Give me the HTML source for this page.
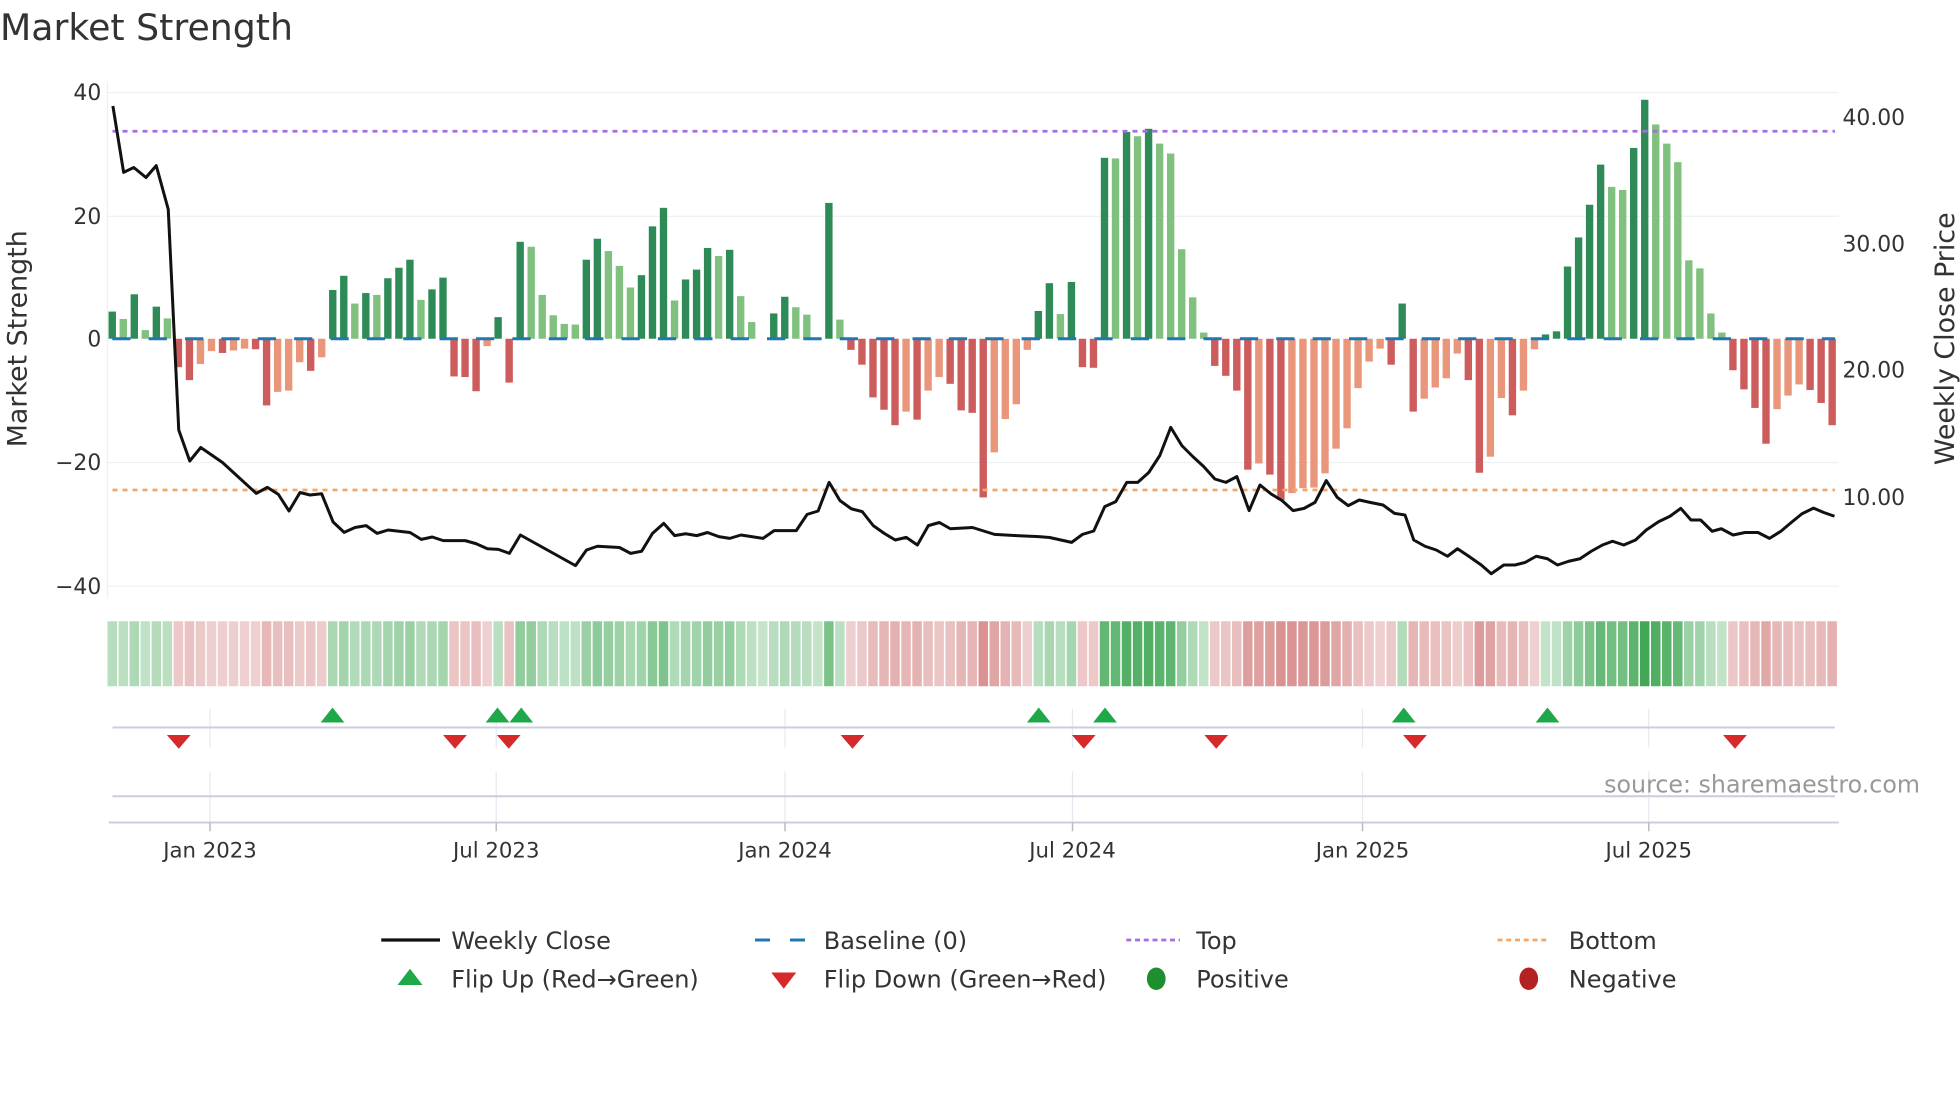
<!DOCTYPE html>
<html><head><meta charset="utf-8"><style>
html,body{margin:0;padding:0;background:#fff;}
svg{display:block;font-family:"DejaVu Sans","Liberation Sans",sans-serif;}
</style></head><body>
<svg id="s" width="1960" height="1102" viewBox="0 0 1568 881.6" xmlns="http://www.w3.org/2000/svg">
<text x="0" y="32" font-size="29" fill="#333">Market Strength</text>
<g stroke="#edf0f4" stroke-width="1">
<line x1="86" y1="74" x2="1471" y2="74"/><line x1="86" y1="173" x2="1471" y2="173"/>
<line x1="86" y1="370" x2="1471" y2="370"/><line x1="86" y1="469" x2="1471" y2="469"/>
<line x1="86" y1="65" x2="86" y2="478"/>
</g>
<g font-size="17.5" fill="#333" text-anchor="end">
<text x="81" y="80">40</text><text x="81" y="179">20</text><text x="81" y="277">0</text>
<text x="81" y="376">−20</text><text x="81" y="475">−40</text>
</g>
<g font-size="17.5" fill="#333">
<text x="1474" y="100">40.00</text><text x="1474" y="201">30.00</text>
<text x="1474" y="302">20.00</text><text x="1474" y="404">10.00</text>
</g>
<text transform="translate(21,271) rotate(-90)" font-size="21.5" fill="#333" text-anchor="middle">Market Strength</text>
<text transform="translate(1563,271) rotate(-90)" font-size="21.5" fill="#333" text-anchor="middle">Weekly Close Price</text>
<g id="bars"></g>
<line x1="89.8" y1="271" x2="1468" y2="271" stroke="#1f77b4" stroke-width="2.4" stroke-dasharray="14.6 14.5"/>
<line x1="90" y1="105" x2="1468" y2="105" stroke="#a66ee0" stroke-width="2.2" stroke-dasharray="4 4"/>
<line x1="90" y1="392" x2="1468" y2="392" stroke="#f2a667" stroke-width="2.2" stroke-dasharray="4 4"/>
<polyline id="price" fill="none" stroke="#111" stroke-width="2.4" stroke-linejoin="round" points=""/>
<g id="heat"></g>
<g stroke="#e6eaf0" stroke-width="1">
<line x1="168" y1="567" x2="168" y2="598"/><line x1="397" y1="567" x2="397" y2="598"/><line x1="628" y1="567" x2="628" y2="598"/><line x1="858" y1="567" x2="858" y2="598"/><line x1="1090" y1="567" x2="1090" y2="598"/><line x1="1319" y1="567" x2="1319" y2="598"/>
<line x1="168" y1="617" x2="168" y2="658"/><line x1="397" y1="617" x2="397" y2="658"/><line x1="628" y1="617" x2="628" y2="658"/><line x1="858" y1="617" x2="858" y2="658"/><line x1="1090" y1="617" x2="1090" y2="658"/><line x1="1319" y1="617" x2="1319" y2="658"/>
</g>
<line x1="90" y1="582" x2="1468" y2="582" stroke="#ccd" stroke-width="1.6"/>
<line x1="90" y1="637" x2="1468" y2="637" stroke="#ccd" stroke-width="1.6"/>
<line x1="87" y1="658" x2="1471" y2="658" stroke="#ccd" stroke-width="1.6"/>
<g stroke="#bbb" stroke-width="1.2">
<line x1="168" y1="658" x2="168" y2="665"/><line x1="397" y1="658" x2="397" y2="665"/><line x1="628" y1="658" x2="628" y2="665"/><line x1="858" y1="658" x2="858" y2="665"/><line x1="1090" y1="658" x2="1090" y2="665"/><line x1="1319" y1="658" x2="1319" y2="665"/>
</g>
<g id="tri"></g>
<text x="1536" y="634" font-size="19" fill="#999" text-anchor="end">source: sharemaestro.com</text>
<g font-size="17" fill="#333" text-anchor="middle">
<text x="168" y="686">Jan 2023</text><text x="397" y="686">Jul 2023</text><text x="628" y="686">Jan 2024</text>
<text x="858" y="686">Jul 2024</text><text x="1090" y="686">Jan 2025</text><text x="1319" y="686">Jul 2025</text>
</g>
<g font-size="19.2" fill="#333">
<line x1="305" y1="752" x2="352" y2="752" stroke="#111" stroke-width="2.6"/>
<text x="361" y="759">Weekly Close</text>
<line x1="604" y1="752" x2="646" y2="752" stroke="#1f77b4" stroke-width="2.4" stroke-dasharray="12 16"/>
<text x="659" y="759">Baseline (0)</text>
<line x1="901" y1="752" x2="944" y2="752" stroke="#a66ee0" stroke-width="2.2" stroke-dasharray="4 3"/>
<text x="957" y="759">Top</text>
<line x1="1198" y1="752" x2="1240" y2="752" stroke="#f2a667" stroke-width="2.2" stroke-dasharray="4 3"/>
<text x="1255" y="759">Bottom</text>
<polygon points="318,788 338,788 328,775" fill="#1fa84a"/>
<text x="361" y="790">Flip Up (Red→Green)</text>
<polygon points="617,778 637,778 627,791" fill="#d62a2a"/>
<text x="659" y="790">Flip Down (Green→Red)</text>
<ellipse cx="925" cy="783" rx="7.5" ry="9" fill="#1e8f2e"/>
<text x="957" y="790">Positive</text>
<ellipse cx="1223" cy="783" rx="7.5" ry="9" fill="#b22222"/>
<text x="1255" y="790">Negative</text>
</g>
</svg>
<script>
var v=[4.4,3.2,7.2,1.4,5.2,3.3,
-4.6,-6.7,-4.1,-2,-2.3,-1.9,-1.6,-1.7,-10.8,-8.6,-8.4,-3.8,-5.2,-3,
7.9,10.2,5.7,7.4,7.1,9.8,11.5,12.8,6.3,8,9.9,
-6.1,-6.2,-8.5,-1.2,3.5,-7.1,
15.7,14.9,7.1,3.8,2.4,2.3,12.8,16.2,14.2,11.8,8.3,10.3,18.2,21.2,6.2,9.6,11.2,14.7,13.4,14.4,
6.9,2.7,0,4.1,6.8,5.1,3.9,0.2,22,3.1,
-1.8,-4.2,-9.5,-11.5,-14,-11.8,-13.1,-8.4,-6.2,-7.3,-11.6,-12,-25.7,-18.4,-13,-10.6,-1.8,
4.5,9,4,9.2,-4.6,-4.7,
29.3,29.2,33.5,32.8,34,31.6,30,14.5,6.7,1,
-4.4,-6,-8.4,-21.2,-20.2,-22,-26.1,-25,-24.2,-24.1,-21.8,-17.8,-14.5,-8,
-3.7,-1.6,-4.2,5.7,
-11.8,-9.7,-7.9,-6.4,-2.4,-6.7,-21.7,-19.1,-9.6,-12.4,-8.4,-1.7,
0.7,1.2,11.7,16.4,21.7,28.2,24.6,24.1,30.9,38.7,34.7,31.6,28.6,12.7,11.4,4.1,1,
-5.1,-8.2,-11.2,-17,-11.4,-9.2,-7.4,-8.3,-10.4,-14];
var NS="http://www.w3.org/2000/svg",x0=89.8,dx=8.82,y0=271,sc=4.94;
var bars=document.getElementById('bars'),heat=document.getElementById('heat');
function R(g,x,y,w,h,f){var r=document.createElementNS(NS,'rect');r.setAttribute('x',x);r.setAttribute('y',y);r.setAttribute('width',w);r.setAttribute('height',h);r.setAttribute('fill',f);g.appendChild(r);}
for(var i=0;i<v.length;i++){
 var x=x0+i*dx,a=v[i],p=i?v[i-1]:0;
 var dark=(i==0)||(a*p<=0)||(Math.abs(a)>Math.abs(p));
 var c=a>=0?(dark?'#2e8b57':'#81c17f'):(dark?'#cd5c5c':'#e9967a');
 var h=Math.abs(a)*sc;
 if(h>0.3)R(bars,x-2.95,a>=0?y0-h:y0,5.9,h,c);
 var t=Math.min(Math.abs(a)/40,1),al=0.3+0.7*t,col;
 if(a>=0){col='rgb('+Math.round(255-al*(255-62))+','+Math.round(255-al*(255-166))+','+Math.round(255-al*(255-82))+')';}
 else{col='rgb('+Math.round(255-al*(255-205))+','+Math.round(255-al*(255-110))+','+Math.round(255-al*(255-110))+')';}
 R(heat,x-3.8,497,7.6,52,col);
}
var pts="90.3,84.8 98.9,137.9 107,134 116.8,142 125,132.5 134.6,167.5 143,344 151.8,368.8 160.6,358 178,370 205,394.7 213.9,389.9 222.7,395.5 231.2,408.8 240,394 248,396 257.3,395 266.5,417.6 275.3,425.9 284,422 292.9,420.5 301.7,426.7 310.5,424 328,426 337,431.5 345.8,429.6 354.6,432.5 372.2,432.5 381,435 389.9,439 398.7,439.5 407.5,442.7 416.3,428 460.4,452.5 469.2,440 478,437 495.6,438 504.5,442.7 513.3,441 522,426.7 531,418.7 539.7,428.5 548.5,427 557.4,428.5 566,426 575,429.3 583.8,430.7 592.8,428 610.4,430.7 619.3,424.5 637,424.5 645.7,411.5 654.5,408.8 663.3,385.9 672,400.5 681,407 689.8,409.3 698.6,420.5 707.4,426.7 716.2,432 725,429.9 733.9,436 742.7,420.5 751.5,418 760.3,423 778,422 795.6,427.5 813,428.5 830.9,429.3 839.7,430 857.3,433.9 866,427.5 875,424.8 883.8,405.3 892.6,401.3 901.4,385.9 910.2,385.9 919,378 927.8,364.5 936.6,341.9 945.5,356.5 954.3,365.3 963,373.3 971.9,383.2 980.7,385.9 989.5,381.3 999.3,408.5 1008,388 1016.9,395.2 1025.7,400.5 1034.5,408.5 1043.3,406.7 1052,401.9 1061,384.5 1069.8,397.9 1078.6,404.5 1087.4,400 1096,401.9 1106.4,404 1115.6,410.7 1124,412 1131,432 1140,437 1149,440 1158,445 1166,439 1175,445 1185,452 1193,459 1203,452 1212,452 1220,450 1229,445 1238,447 1246,452 1255,449 1264,447 1273,441 1282,436 1290,433 1299,436 1308.4,432 1317,424 1327,417.3 1336,413 1344.6,406.7 1352.8,416 1360.5,416 1369.7,425 1377,423 1386.5,428 1396,426 1406.4,426 1415.6,430.7 1424.7,425 1433,418 1441.6,411 1450.8,406.5 1459,410 1467.6,413";
document.getElementById('price').setAttribute('points',pts);
var tri=document.getElementById('tri');
function T(x,up){var p=document.createElementNS(NS,'polygon');
 if(up)p.setAttribute('points',(x-9.5)+',578 '+(x+9.5)+',578 '+x+',566');
 else p.setAttribute('points',(x-9.5)+',588 '+(x+9.5)+',588 '+x+',599');
 p.setAttribute('fill',up?'#1fa84a':'#d62a2a');tri.appendChild(p);}
[266,398,417,831,884,1123,1238].forEach(function(x){T(x,true);});
[143,364,407,682,867,973,1132,1388].forEach(function(x){T(x,false);});
</script>
</body></html>
